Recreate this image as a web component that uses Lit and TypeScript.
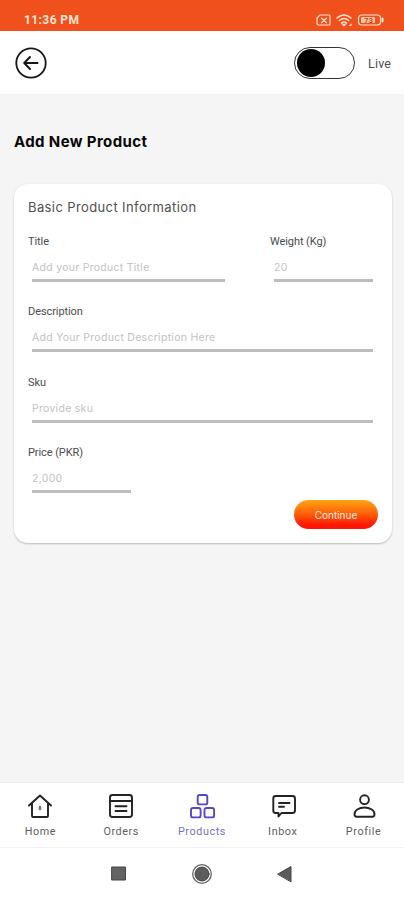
import { LitElement, html, css, svg } from "lit";
import { customElement, property } from "lit/decorators.js";

@customElement("form-field")
class FormField extends LitElement {
  @property() label = "";
  @property() placeholder = "";

  static styles = css`
    :host {
      display: block;
      height: 50px;
    }
    .label {
      box-sizing: border-box;
      height: 17px;
      padding-top: 1px;
      line-height: 16px;
      font-family: Roboto, sans-serif;
      font-size: 11px;
      letter-spacing: -0.08px;
      color: #4c4c4c;
      white-space: nowrap;
    }
    .box {
      box-sizing: border-box;
      height: 32px;
      margin-left: 4px;
      padding-top: 10px;
      line-height: 16px;
      font-size: 10.5px;
      letter-spacing: 0.28px;
      color: #c2c2c2;
      border-bottom: 3px solid #bdbdbd;
      white-space: nowrap;
    }
  `;

  render() {
    return html`<div class="label">${this.label}</div>
      <div class="box">${this.placeholder}</div>`;
  }
}

const icons: Record<string, unknown> = {
  Home: svg`<path d="M3 13.500 14 3.500l11 10M6 11v13q0 1 1 1h14q1 0 1-1V11"/><path d="M14 15v2" stroke="#777" stroke-width="2.600"/>`,
  Orders: svg`<rect x="3" y="3" width="22" height="22" rx="2.500"/><path d="M3 9h22M8.500 14.200h11M8.500 19h11"/>`,
  Products: svg`<rect x="9.700" y="3" width="9.600" height="9.400" rx="2"/><rect x="3" y="16" width="9.600" height="9.400" rx="2"/><rect x="16.500" y="16" width="9.600" height="9.400" rx="2"/>`,
  Inbox: svg`<path d="M6.500 4h17Q26 4 26 6.500v12q0 2.500-2.500 2.500H12.500L9.500 24.500V21h-3Q4.300 21 4.300 18.500v-12Q4.300 4 6.500 4Z"/><path d="M10 11h10.500M10 14.800h5"/>`,
  Profile: svg`<circle cx="14.500" cy="7.700" r="4.400"/><path d="M4.500 22.300c0-9 20-9 20 0 0 1.500-.8 2.500-2.300 2.500H6.800C5.300 24.800 4.500 23.800 4.500 22.300Z"/>`,
};

@customElement("app-root")
class AppRoot extends LitElement {
  static styles = css`
    :host {
      display: flex;
      flex-direction: column;
      width: 404px;
      height: 900px;
      overflow: hidden;
      background: #f5f5f5;
      font-family: Inter, sans-serif;
      color: #444;
    }
    svg { display: block; fill: none; stroke: currentColor; stroke-linecap: round; stroke-linejoin: round; }
    .status {
      flex: none;
      box-sizing: border-box;
      height: 31px;
      padding: 10px 20px 0 24px;
      display: flex;
      justify-content: space-between;
      background: #f0501c;
      color: #ffe4d4;
      font: 700 12px/20px Roboto, sans-serif;
    }
    .clock { letter-spacing: 0.4px; }
    .header {
      flex: none;
      box-sizing: border-box;
      height: 63px;
      padding: 0 12px 0 14px;
      display: flex;
      align-items: center;
      background: #fff;
    }
    .back { color: #171717; }
    .toggle {
      box-sizing: border-box;
      width: 61px;
      height: 32px;
      margin-left: auto;
      padding: 1px;
      border: 1.5px solid #333;
      border-radius: 16px;
    }
    .knob { width: 28px; height: 28px; margin-left: 1px; border-radius: 50%; background: #000; }
    .live { width: 24px; margin: 2px 0 0 13px; font: 12.5px/16px Roboto, sans-serif; letter-spacing: 0.2px; color: #4c4c4c; }
    h1 {
      margin: 37px 14px 0;
      height: 22px;
      font-size: 15px;
      line-height: 22px;
      font-weight: 700;
      color: #080808;
      white-space: nowrap;
      letter-spacing: 0.38px;
    }
    .card {
      flex: none;
      box-sizing: border-box;
      width: 377.5px;
      height: 359px;
      margin: 31px 0 0 14px;
      padding: 13px 13.5px 0 14px;
      display: flex;
      flex-direction: column;
      background: #fff;
      border-radius: 14px;
      box-shadow: 0 1px 2px #0000003d;
    }
    h2 {
      margin: 0 0 16px;
      height: 20px;
      font-size: 13px;
      line-height: 20px;
      font-weight: 400;
      color: #505050;
      letter-spacing: 0.39px;
    }
    .fields {
      display: grid;
      grid-template-columns: 197px 103px;
      justify-content: start;
      column-gap: 45px;
      row-gap: 20.3px;
    }
    .wide { grid-column: 1 / 3; }
    .price { grid-column: 1; width: 103px; }
    .continue {
      flex: none;
      width: 84px;
      height: 29px;
      margin: 6.2px 0 0 auto;
      padding: 0;
      border: 0;
      border-radius: 15px;
      background: linear-gradient(#ffa612, #ff5a08 50%, #ff1607 88%);
      color: #fff0e2;
      font: 400 10px/30px Inter, sans-serif;
    }
    .tabs {
      flex: none;
      box-sizing: border-box;
      height: 66px;
      margin-top: auto;
      border-top: 1px solid #ececec;
      border-bottom: 1px solid #f3f3f3;
      display: grid;
      grid-template-columns: repeat(5, 1fr);
      background: #fff;
    }
    .tab {
      display: flex;
      flex-direction: column;
      align-items: center;
      padding-top: 9px;
      font-family: Roboto, sans-serif;
      font-size: 10.8px;
      line-height: 14px;
      letter-spacing: 0.6px;
      color: #606060;
    }
    .tab svg { color: #222; margin-bottom: 5px; }
    .tab.on { color: #7074bd; }
    .tab.on svg { color: #5448c8; }
    .system {
      flex: none;
      height: 52px;
      background: #fff;
    }
  `;

  render() {
    return html`
      <div class="status">
        <span class="clock">11:36 PM</span>
        <svg width="68" height="20" viewBox="0 0 68 20" stroke-width="1.2">
          <path d="M4 5h9q1 0 1 1v8q0 1-1 1H2.500Q1 15 1 13.500V8ZM5.500 8.200l5 4.500M10.500 8.200l-5 4.500" />
          <path d="M21 8q7-6 14 0M23.300 10.500q4.700-4 9.400 0M25.500 13q2.500-2 5 0L28 15.500Z" stroke-width="1.500" />
          <path d="M33.500 15.500h1.500v-1.500" />
          <rect x="42.500" y="5" width="22" height="10" rx="3" />
          <rect x="45" y="7" width="14" height="6" rx="1" fill="#ffc8a8" stroke="none" />
          <text x="48" y="13" font-size="8" fill="#d84817" stroke="none">73</text>
          <path d="M66.500 8.500v3" stroke-width="2" />
        </svg>
      </div>
      <div class="header">
        <svg class="back" width="34" height="34" viewBox="0 0 34 34" stroke-width="1.8">
          <circle cx="17" cy="17" r="14.700" />
          <path d="M23.500 17H10.500M16 11 10.200 17l5.800 6" stroke-width="2" />
        </svg>
        <div class="toggle"><div class="knob"></div></div>
        <span class="live">Live</span>
      </div>
      <h1>Add New Product</h1>
      <div class="card">
        <h2>Basic Product Information</h2>
        <div class="fields">
          <form-field label="Title" placeholder="Add your Product Title"></form-field>
          <form-field label="Weight (Kg)" placeholder="20"></form-field>
          <form-field class="wide" label="Description" placeholder="Add Your Product Description Here"></form-field>
          <form-field class="wide" label="Sku" placeholder="Provide sku"></form-field>
          <form-field class="price" label="Price (PKR)" placeholder="2,000"></form-field>
        </div>
        <button class="continue">Continue</button>
      </div>
      <div class="tabs">
        ${Object.entries(icons).map(
          ([name, icon]) => html`<div class="tab ${name === "Products" ? "on" : ""}">
            <svg width="28" height="28" viewBox="0 0 28 28" stroke-width="1.9">${icon}</svg>
            ${name}
          </div>`
        )}
      </div>
      <div class="system">
        <svg width="404" height="52" viewBox="0 1 404 52" stroke="none">
          <rect x="112" y="20" width="13.500" height="13" fill="#636363" />
          <circle cx="202" cy="27" r="9.300" stroke="#666" stroke-width="1.300" />
          <circle cx="202" cy="27" r="7" fill="#5c5c5c" />
          <path d="M278 27 291 19.500v15Z" fill="#5c5c5c" />
        </svg>
      </div>
    `;
  }
}
